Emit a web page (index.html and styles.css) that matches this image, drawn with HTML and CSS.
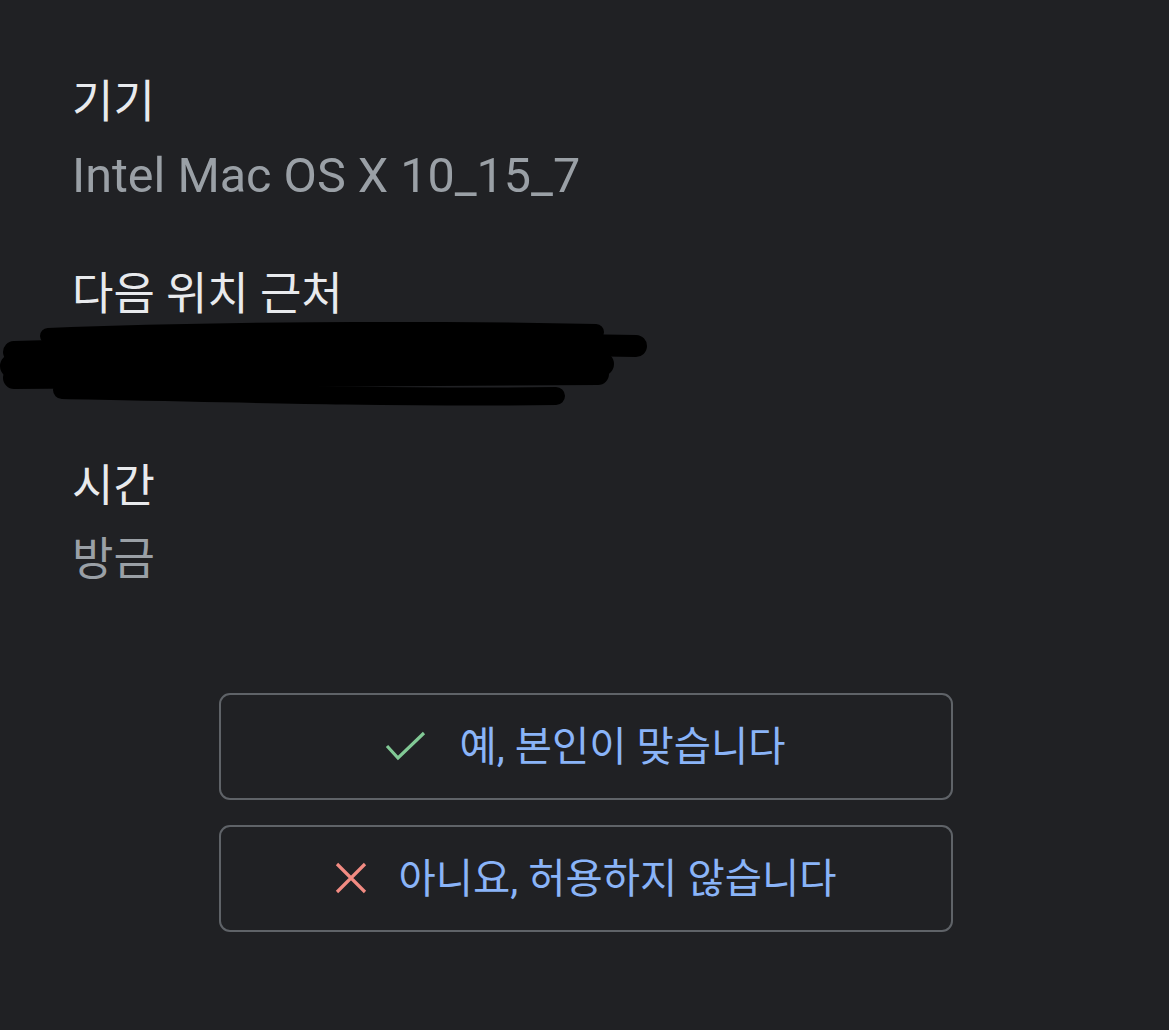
FILE: index.html
```html
<!DOCTYPE html>
<html lang="ko">
<head>
<meta charset="utf-8">
<link rel="stylesheet" href="styles.css">
</head>
<body>
<main class="page">
  <section class="info">
    <div class="group">
      <div class="label">기기</div>
      <div class="value latin">Intel Mac OS X 10_15_7</div>
    </div>
    <div class="group">
      <div class="label">다음 위치 근처</div>
      <div class="value redacted">
        <svg class="scribble" width="660" height="90" viewBox="0 0 660 90" aria-hidden="true">
          <g stroke="#000" stroke-linecap="round" fill="none">
            <path d="M48 14 C200 8 420 6 596 10" stroke-width="16"/>
            <path d="M14 30 C220 24 430 20 636 24" stroke-width="22"/>
            <path d="M12 44 C220 40 430 38 602 42" stroke-width="24"/>
            <path d="M14 56 C220 54 420 52 598 52" stroke-width="22"/>
            <path d="M62 68 C250 72 420 76 556 74" stroke-width="18"/>
            <path d="M40 40 L590 36" stroke-width="40"/>
          </g>
        </svg>
      </div>
    </div>
    <div class="group">
      <div class="label">시간</div>
      <div class="value">방금</div>
    </div>
  </section>
  <section class="actions">
    <button class="btn">
      <svg class="icon" width="42" height="30" viewBox="0 0 42 30" aria-hidden="true">
        <path d="M2 15 L13 27 L39 2" stroke="#81c995" stroke-width="3.2" fill="none"/>
      </svg>
      <span class="btn-text">예, 본인이 맞습니다</span>
    </button>
    <button class="btn">
      <svg class="icon" width="32" height="32" viewBox="0 0 32 32" aria-hidden="true">
        <path d="M2 2 L30 30 M30 2 L2 30" stroke="#f28b82" stroke-width="3.2" fill="none"/>
      </svg>
      <span class="btn-text">아니요, 허용하지 않습니다</span>
    </button>
  </section>
</main>
</body>
</html>
```

FILE: styles.css
```css
html, body {
  margin: 0;
  padding: 0;
  background: #202124;
}

body {
  font-family: Roboto, "Noto Sans CJK KR", "Noto Sans", sans-serif;
  -webkit-font-smoothing: antialiased;
}

.page {
  width: 1169px;
  min-height: 1030px;
  box-sizing: border-box;
  padding-top: 66px;
}

.info {
  padding-left: 72px;
  display: flex;
  flex-direction: column;
  gap: 46px;
}

.group {
  display: flex;
  flex-direction: column;
}

.label {
  font-size: 45px;
  line-height: 73px;
  color: #e8eaed;
}

.value {
  font-size: 45px;
  line-height: 73px;
  color: #9aa0a6;
  height: 73px;
}

.value.latin {
  font-size: 48.5px;
  line-height: 73px;
  height: 73px;
}

.redacted {
  position: relative;
}

.scribble {
  position: absolute;
  left: -72px;
  top: -9px;
}

.actions {
  margin-top: 97px;
  display: flex;
  flex-direction: column;
  align-items: center;
  gap: 25px;
}

.btn {
  width: 734px;
  height: 107px;
  box-sizing: border-box;
  border: 2px solid #5f6368;
  border-radius: 11px;
  background: transparent;
  display: flex;
  align-items: center;
  justify-content: center;
  gap: 32px;
  font-family: Roboto, "Noto Sans CJK KR", "Noto Sans", sans-serif;
  font-size: 40.5px;
  color: #8ab4f8;
  padding: 0 0 6px 0;
  margin-left: 2px;
}

.icon {
  flex: none;
  margin-top: 4px;
}
```
